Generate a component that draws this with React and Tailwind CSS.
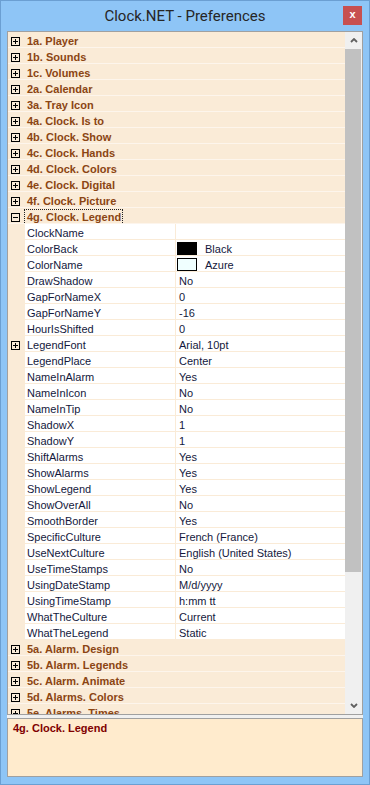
import React from 'react';

const topGroups = [
  '1a. Player',
  '1b. Sounds',
  '1c. Volumes',
  '2a. Calendar',
  '3a. Tray Icon',
  '4a. Clock. Is to',
  '4b. Clock. Show',
  '4c. Clock. Hands',
  '4d. Clock. Colors',
  '4e. Clock. Digital',
  '4f. Clock. Picture',
];

const props = [
  ['ClockName', ''],
  ['ColorBack', 'Black', '#000000'],
  ['ColorName', 'Azure', '#f0ffff'],
  ['DrawShadow', 'No'],
  ['GapForNameX', '0'],
  ['GapForNameY', '-16'],
  ['HourIsShifted', '0'],
  ['LegendFont', 'Arial, 10pt', null, true],
  ['LegendPlace', 'Center'],
  ['NameInAlarm', 'Yes'],
  ['NameInIcon', 'No'],
  ['NameInTip', 'No'],
  ['ShadowX', '1'],
  ['ShadowY', '1'],
  ['ShiftAlarms', 'Yes'],
  ['ShowAlarms', 'Yes'],
  ['ShowLegend', 'Yes'],
  ['ShowOverAll', 'No'],
  ['SmoothBorder', 'Yes'],
  ['SpecificCulture', 'French (France)'],
  ['UseNextCulture', 'English (United States)'],
  ['UseTimeStamps', 'No'],
  ['UsingDateStamp', 'M/d/yyyy'],
  ['UsingTimeStamp', 'h:mm tt'],
  ['WhatTheCulture', 'Current'],
  ['WhatTheLegend', 'Static'],
];

const bottomGroups = [
  '5a. Alarm. Design',
  '5b. Alarm. Legends',
  '5c. Alarm. Animate',
  '5d. Alarms. Colors',
  '5e. Alarms. Times',
];

const ExpandBox = ({ open }) => (
  <svg width="9" height="9" viewBox="0 0 9 9" className="block">
    <rect x="0.5" y="0.5" width="8" height="8" fill="none" stroke="#000" />
    <path d="M2 4.5h5" stroke="#000" />
    {!open && <path d="M4.5 2v5" stroke="#000" />}
  </svg>
);

const Chevron = ({ down }) => (
  <svg width="8" height="5" viewBox="0 0 8 5" className="block">
    <polyline
      points={down ? '1,1 4,4 7,1' : '1,4 4,1 7,4'}
      fill="none"
      stroke="#606060"
      strokeWidth="1.8"
    />
  </svg>
);

const GroupRow = ({ label, open, focused }) => (
  <div className="flex h-[16px] shrink-0 bg-[#faebd7] border-b border-[#fdf5ec]">
    <div className="w-[17px] pl-[3px] pt-[5px]">
      <ExpandBox open={open} />
    </div>
    <div className="pl-[2px] pt-[3px] font-bold text-[11px] leading-[12px] text-[#8b4513] whitespace-nowrap">
      {focused ? (
        <span className="inline-block ml-[-3px] mt-[-2px] pl-[2px] pr-[1px] pt-[1px] pb-[1px] border border-dotted border-[#222] leading-[12px]">
          {label}
        </span>
      ) : (
        label
      )}
    </div>
  </div>
);

const PropRow = ({ name, value, swatch, expandable }) => (
  <div className="flex h-[16px] shrink-0 text-[11px] leading-[12px] text-[#14183c]">
    <div className="w-[17px] bg-[#faebd7] pl-[3px] pt-[5px]">
      {expandable && <ExpandBox />}
    </div>
    <div className="w-[151px] bg-white border-b border-r border-[#faebd7] pl-[2px] pt-[3px] whitespace-nowrap">
      {name}
    </div>
    <div className="flex-1 bg-white border-b border-[#faebd7] whitespace-nowrap">
      {swatch ? (
        <div className="flex items-center h-[15px] pl-[1px] pt-[2px] gap-[8px]">
          <div className="w-[20px] h-[13px] border border-black" style={{ backgroundColor: swatch }} />
          <span className="mt-[1px]">{value}</span>
        </div>
      ) : (
        <div className="pl-[3px] pt-[3px]">{value}</div>
      )}
    </div>
  </div>
);

export default function App() {
  return (
    <div className="w-[370px] h-[785px] bg-[#8ec5f6] border border-[#6b9fd2] flex flex-col font-['Liberation_Sans',Arial,sans-serif]">
      <div className="relative h-[30px] shrink-0 flex items-center justify-center">
        <span className="font-['Roboto',sans-serif] text-[15px] text-[#262626]">Clock.NET - Preferences</span>
        <div className="absolute right-[7px] top-[5px] w-[19px] h-[19px] bg-[#c75050] flex items-center justify-center">
          <span className="text-white font-bold text-[11px] leading-none mt-[-2px]">x</span>
        </div>
      </div>

      <div className="px-[6px] flex flex-col">
        <div className="h-[684px] border border-[#a0a0a0] flex bg-white">
          <div className="w-[337px] overflow-hidden flex flex-col">
            {topGroups.map((g) => (
              <GroupRow key={g} label={g} />
            ))}
            <GroupRow label="4g. Clock. Legend" open focused />
            {props.map(([n, v, s, e]) => (
              <PropRow key={n} name={n} value={v} swatch={s} expandable={e} />
            ))}
            {bottomGroups.map((g) => (
              <GroupRow key={g} label={g} />
            ))}
          </div>
          <div className="w-[17px] bg-[#f0f0f0] flex flex-col">
            <div className="h-[17px] flex items-center justify-center">
              <Chevron />
            </div>
            <div className="h-[523px] mr-[1px] bg-[#c1c1c1]" />
            <div className="flex-1" />
            <div className="h-[17px] flex items-center justify-center">
              <Chevron down />
            </div>
          </div>
        </div>

        <div className="h-[3px] bg-[#f0f0f0]" />

        <div className="h-[59px] border border-[#a0a0a0] bg-[#ffebcd] pl-[5px] pt-[2px]">
          <div className="font-bold text-[11px] leading-[14px] text-[#800000]">4g. Clock. Legend</div>
        </div>
      </div>
    </div>
  );
}
